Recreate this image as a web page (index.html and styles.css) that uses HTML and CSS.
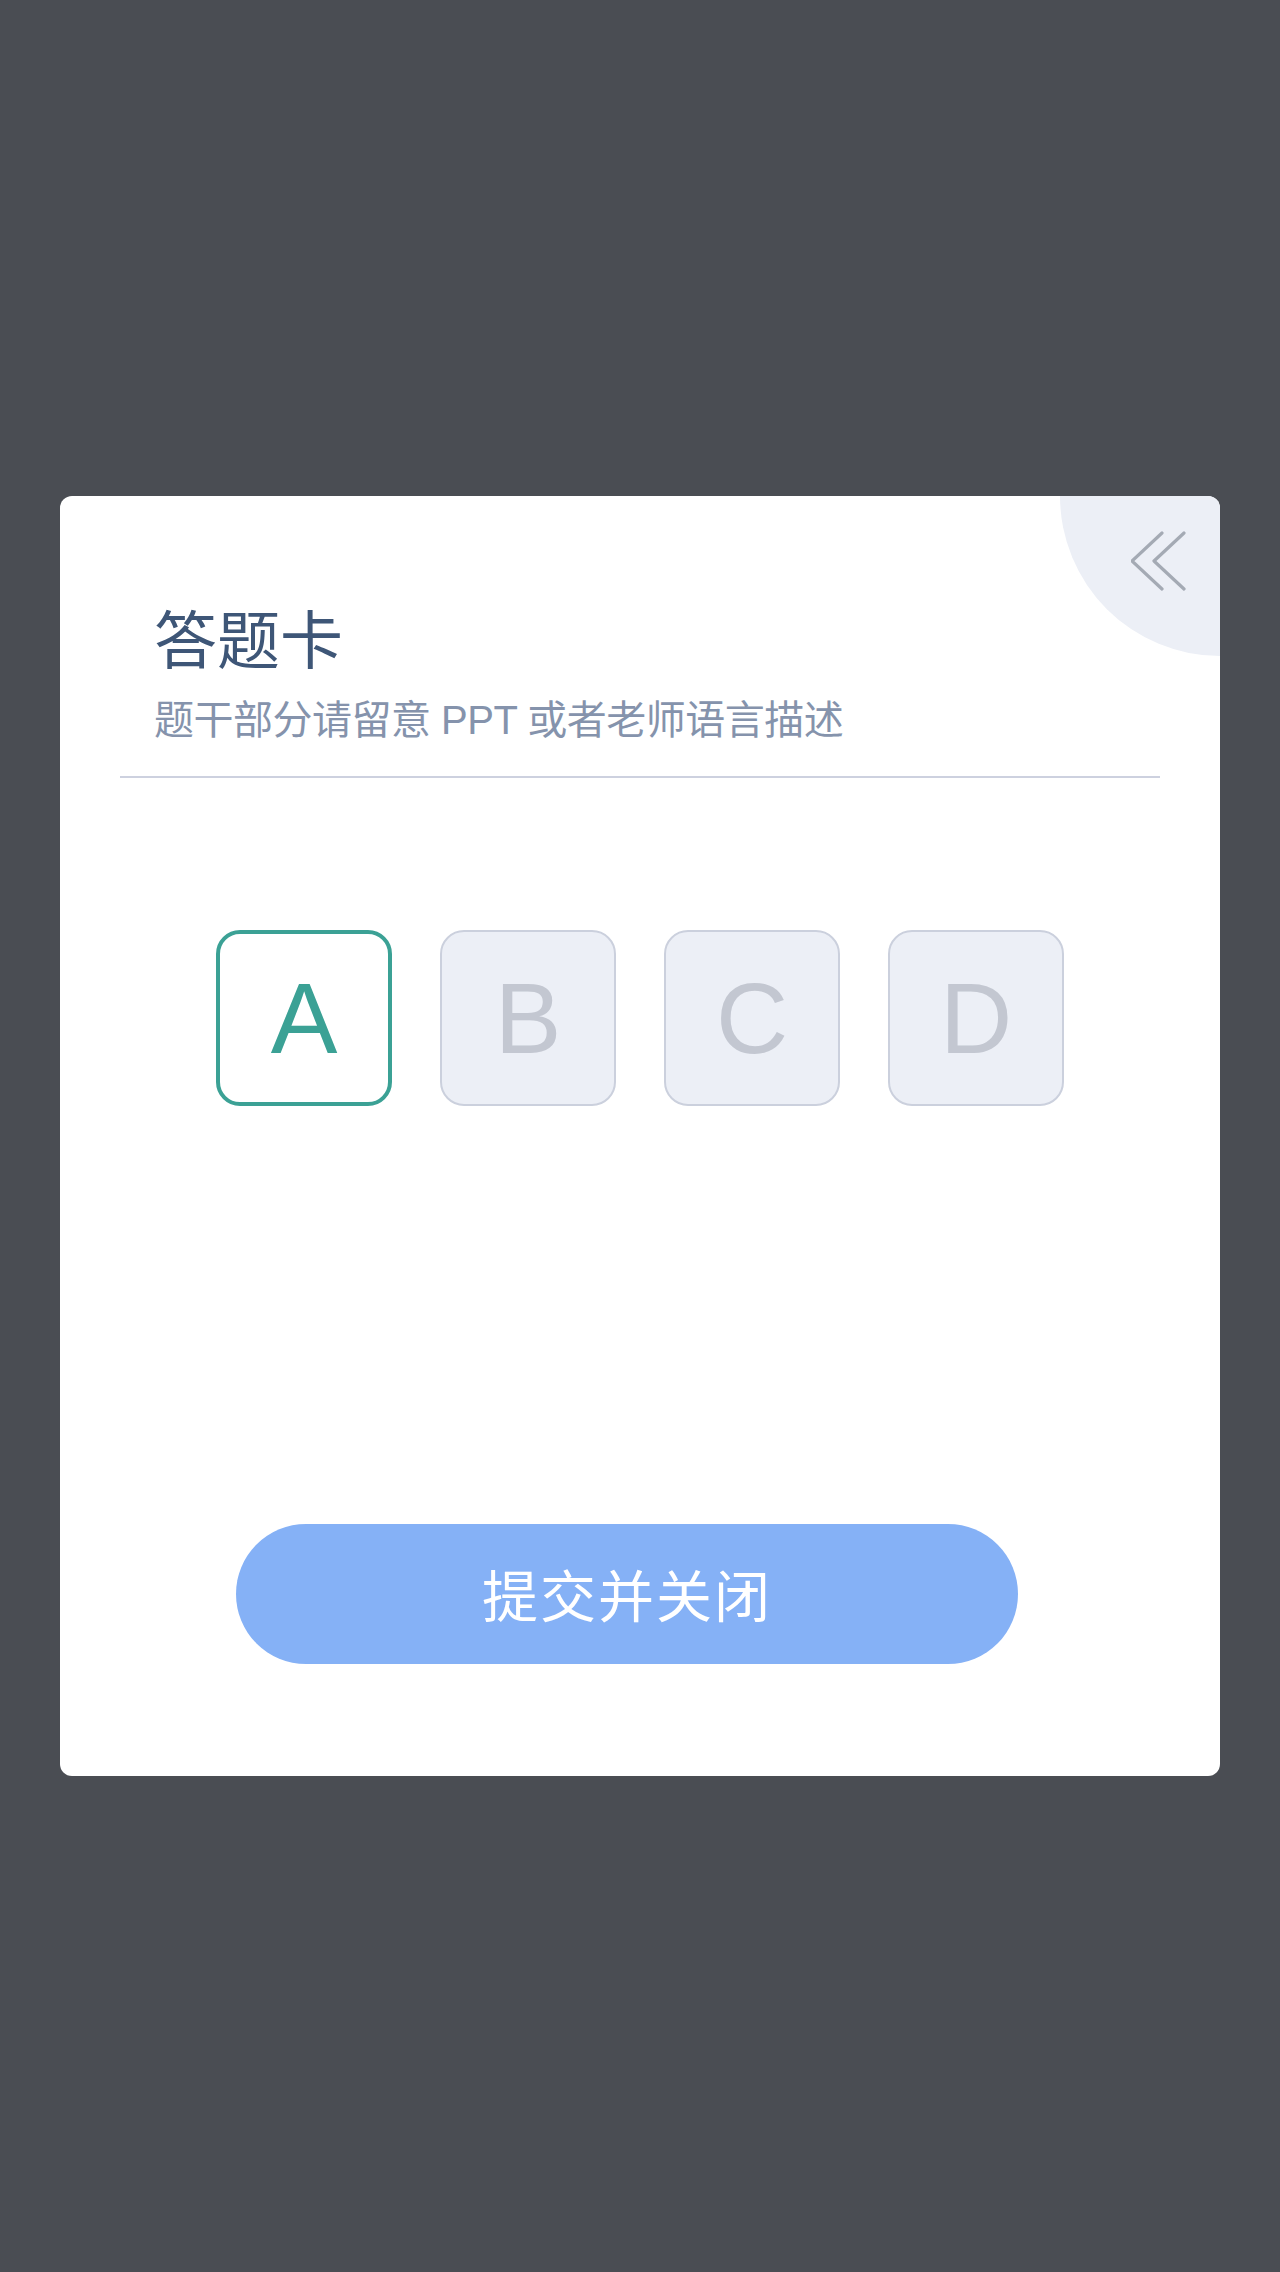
FILE: index.html
```html
<!DOCTYPE html>
<html lang="zh-CN">
<head>
<meta charset="utf-8">
<title>答题卡</title>
<link rel="stylesheet" href="styles.css">
</head>
<body>
<div class="card">
  <div class="corner">
    <svg class="corner-icon" width="60" height="62" viewBox="0 0 60 62" aria-hidden="true">
      <polyline points="31,2 1,30 31,58" fill="none" stroke="#a4aab4" stroke-width="3.2" stroke-linecap="round" stroke-linejoin="round"/>
      <polyline points="53,2 23,30 53,58" fill="none" stroke="#a4aab4" stroke-width="3.2" stroke-linecap="round" stroke-linejoin="round"/>
    </svg>
  </div>
  <div class="header">
    <h1 class="title">答题卡</h1>
    <p class="subtitle">题干部分请留意 PPT 或者老师语言描述</p>
  </div>
  <div class="divider"></div>
  <div class="options">
    <div class="option selected">A</div>
    <div class="option">B</div>
    <div class="option">C</div>
    <div class="option">D</div>
  </div>
  <button class="submit">提交并关闭</button>
</div>
</body>
</html>
```

FILE: styles.css
```css
html, body {
  margin: 0;
  padding: 0;
}
body {
  background: #4a4d53;
  min-height: 2272px;
  display: flex;
  align-items: center;
  justify-content: center;
  font-family: "Liberation Sans", "Noto Sans CJK SC", sans-serif;
}
.card {
  position: relative;
  width: 1160px;
  height: 1280px;
  box-sizing: border-box;
  background: #ffffff;
  border-radius: 12px;
  overflow: hidden;
  padding: 0 60px;
  display: flex;
  flex-direction: column;
}
.corner {
  position: absolute;
  right: -160px;
  top: -160px;
  width: 320px;
  height: 320px;
  border-radius: 50%;
  background: #eceff6;
}
.corner-icon {
  position: absolute;
  left: 71px;
  top: 195px;
}
.header {
  padding: 114px 0 0 34px;
  position: relative;
}
.title {
  margin: 0;
  font-size: 63px;
  line-height: 62px;
  font-weight: 400;
  color: #3e5677;
}
.subtitle {
  margin: 28px 0 0;
  font-size: 40px;
  line-height: 40px;
  letter-spacing: -0.5px;
  color: #8593ac;
}
.divider {
  margin-top: 36px;
  height: 2px;
  background: #cdd1df;
}
.options {
  margin-top: 152px;
  display: flex;
  justify-content: center;
  gap: 48px;
}
.option {
  width: 176px;
  height: 176px;
  box-sizing: border-box;
  border: 2px solid #cbd0dd;
  border-radius: 24px;
  background: #eceff6;
  color: #c3c7d1;
  font-size: 100px;
  display: flex;
  align-items: center;
  justify-content: center;
}
.option.selected {
  border: 4px solid #3ba195;
  background: #ffffff;
  color: #3ba195;
}
.submit {
  margin-top: 418px;
  margin-left: 116px;
  width: 782px;
  height: 140px;
  border: none;
  border-radius: 70px;
  background: #85b1f6;
  color: #ffffff;
  font-family: "Noto Sans CJK SC", sans-serif;
  font-size: 56px;
  letter-spacing: 2px;
  padding: 0 0 4px;
}
```
